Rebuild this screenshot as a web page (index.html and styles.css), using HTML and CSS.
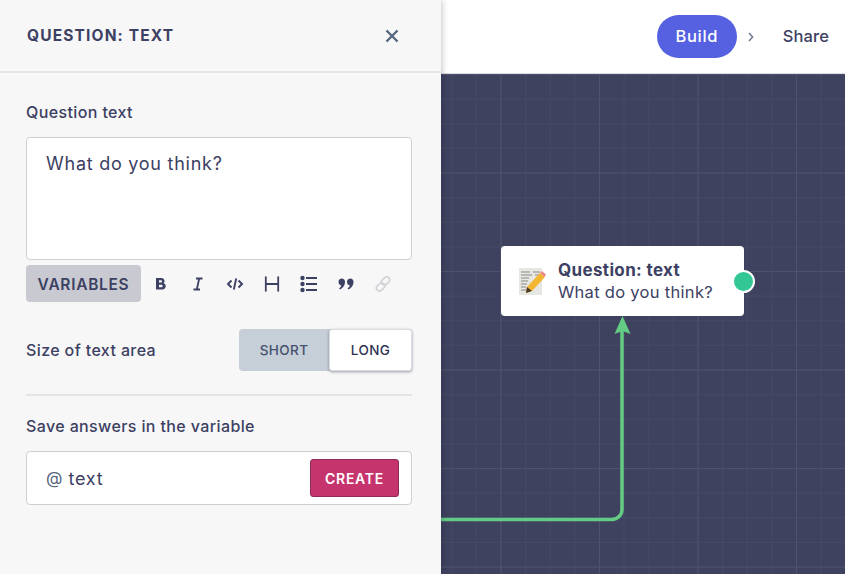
FILE: index.html
```html
<!DOCTYPE html>
<html lang="en">
<head>
<meta charset="utf-8">
<title>Question: text</title>
<link rel="stylesheet" href="styles.css">
</head>
<body>
<div class="app">
  <header class="topbar">
    <nav class="steps">
      <span class="step-active">Build</span>
      <svg class="chevron" width="6" height="10" viewBox="0 0 6 10"><path d="M1 1l3.600 4L1 9" fill="none" stroke="#73788f" stroke-width="1.500"/></svg>
      <span class="step">Share</span>
    </nav>
  </header>
  <main class="canvas">
    <svg class="edge" width="404" height="501" viewBox="0 0 404 501">
      <path d="M0 445.500H171a10 10 0 0 0 10-10V250" fill="none" stroke="#63cb84" stroke-width="3.500"/>
      <path d="M181.500 242l8 18-8-3-8 3z" fill="#63cb84"/>
    </svg>
    <div class="node">
      <svg class="memo" width="28" height="28" viewBox="0 0 28 28">
        <rect x="0" y="1" width="23" height="27" fill="#e6e6e2"/>
        <path d="M2 5h9M2 8h11M2 11h8M2 14h7M2 17h6M2 20h5M2 23h7M14 5h7M16 8h5" stroke="#8a8a86" stroke-width="1"/>
        <path d="M8 20L21 6l5 4-13 14-6 2z" fill="#f2b632"/>
        <path d="M21 6l2-2 4 3.500-1.500 2.500z" fill="#e88a8a"/>
        <path d="M7 26l1-6 5 4z" fill="#4a3a28"/>
      </svg>
      <div class="node-text">
        <strong class="node-title">Question: text</strong>
        <span class="node-sub">What do you think?</span>
      </div>
      <span class="port"></span>
    </div>
  </main>
  <aside class="panel">
    <div class="panel-head">
      <h1 class="panel-title">QUESTION: TEXT</h1>
      <svg class="close" width="14" height="14" viewBox="0 0 14 14"><path d="M1.500 1.500l11 11M12.500 1.500l-11 11" stroke="#56677d" stroke-width="2.400"/></svg>
    </div>
    <div class="panel-body">
      <label class="label">Question text</label>
      <div class="textarea">What do you think?</div>
      <div class="toolbar">
        <button class="vars">VARIABLES</button>
        <span class="tool">
          <svg width="18" height="18" viewBox="0 0 18 18"><path d="M4 3h5.500a3 3 0 0 1 2 5.300A3.200 3.200 0 0 1 10 14.500H4zM7 5.300v2.200h2a1.100 1.100 0 0 0 0-2.200zM7 9.700v2.500h2.400a1.250 1.250 0 0 0 0-2.500z" fill="#3c4063" fill-rule="evenodd"/></svg>
        </span>
        <span class="tool">
          <svg width="18" height="18" viewBox="0 0 18 18"><path d="M7 3.500h6.500M4.500 14.500H11M10.200 3.500L7.800 14.500" fill="none" stroke="#3c4063" stroke-width="1.800"/></svg>
        </span>
        <span class="tool">
          <svg width="18" height="18" viewBox="0 0 18 18"><path d="M5.500 5.500L2 9l3.500 3.500M12.500 5.500L16 9l-3.500 3.500M10.200 3.500L7.800 14.500" fill="none" stroke="#3c4063" stroke-width="1.900"/></svg>
        </span>
        <span class="tool">
          <svg width="18" height="18" viewBox="0 0 18 18"><path d="M2.800 1.500v15M15.200 1.500v15M2.800 9h12.400" fill="none" stroke="#3c4063" stroke-width="1.800"/></svg>
        </span>
        <span class="tool">
          <svg width="18" height="18" viewBox="0 0 18 18"><circle cx="2.500" cy="3" r="2.200" fill="#3c4063"/><circle cx="2.500" cy="9" r="2.200" fill="#3c4063"/><circle cx="2.500" cy="15" r="2.200" fill="#3c4063"/><path d="M6 3h11M6 9h11M6 15h11" stroke="#3c4063" stroke-width="1.800"/></svg>
        </span>
        <span class="tool">
          <svg width="18" height="18" viewBox="0 0 18 18"><path d="M4.500 3.500a3.500 3.500 0 0 1 3.500 3.500c0 3.500-2.200 6-5 7.500l-.9-1.300c1.200-.8 2-1.700 2.300-2.800A3.500 3.500 0 0 1 4.500 3.500zM13 3.500a3.500 3.500 0 0 1 3.500 3.500c0 3.500-2.200 6-5 7.500l-.9-1.300c1.200-.8 2-1.700 2.300-2.800A3.500 3.500 0 0 1 13 3.500z" fill="#3c4063"/></svg>
        </span>
        <span class="tool">
          <svg width="18" height="18" viewBox="0 0 18 18"><g fill="none" stroke="#d2d2d6" stroke-width="1.600"><rect x="8.500" y="1.500" width="6" height="9" rx="3" transform="rotate(45 11.500 6)"/><rect x="3.500" y="7.500" width="6" height="9" rx="3" transform="rotate(45 6.500 12)"/></g></svg>
        </span>
      </div>
      <div class="size-row">
        <span class="label">Size of text area</span>
        <div class="toggle">
          <span class="opt">SHORT</span>
          <span class="opt opt-on">LONG</span>
        </div>
      </div>
      <hr class="divider">
      <label class="label">Save answers in the variable</label>
      <div class="var-input">
        <span class="at">@</span>
        <span class="var-name">text</span>
        <button class="create">CREATE</button>
      </div>
    </div>
  </aside>
</div>
</body>
</html>
```
FILE: styles.css
```css
* { box-sizing: border-box; }
html, body { margin: 0; height: 100%; }
body {
  font-family: "Inter", "Liberation Sans", sans-serif;
  color: #3c4063;
  overflow: hidden;
}
.app {
  position: relative;
  width: 845px;
  height: 574px;
  display: flex;
  flex-direction: column;
  overflow: hidden;
}
.topbar {
  height: 74px;
  flex: none;
  background: #fff;
  border-bottom: 1px solid #d9dadd;
  display: flex;
  justify-content: flex-end;
  align-items: flex-start;
  padding: 15px 16px 0 0;
}
.steps { display: flex; align-items: center; }
.step-active {
  width: 80px;
  height: 43px;
  border-radius: 22px;
  background: #5561e0;
  color: #fff;
  font-size: 16.500px;
  font-weight: 500;
  letter-spacing: .7px;
  padding-bottom: 2px;
  display: flex;
  align-items: center;
  justify-content: center;
}
.chevron { margin: 1px 29px 0 11px; }
.step { font-size: 16.500px; font-weight: 500; letter-spacing: .1px; margin-top: -1px; }
.canvas {
  position: relative;
  flex: 1;
  background-color: #3e425e;
  background-image:
    linear-gradient(#4f526e 1px, transparent 1px),
    linear-gradient(90deg, #4f526e 1px, transparent 1px),
    linear-gradient(#464965 1px, transparent 1px),
    linear-gradient(90deg, #464965 1px, transparent 1px);
  background-size: 98.500px 98.500px, 98.500px 98.500px, 24.625px 24.625px, 24.625px 24.625px;
  background-position: 0 0, 8px 0, 0 0, 8px 0;
}
.edge { position: absolute; left: 441px; top: 0; }
.node {
  position: absolute;
  left: 501px;
  top: 172px;
  width: 243px;
  height: 70px;
  background: #fff;
  border-radius: 4px;
  display: flex;
  align-items: center;
  padding-left: 18px;
}
.memo { flex: none; margin-right: 11px; }
.node-text { display: flex; flex-direction: column; gap: 2px; }
.node-title { font-size: 17px; font-weight: 700; line-height: 20px; letter-spacing: .35px; }
.node-sub { font-size: 16.500px; line-height: 20px; letter-spacing: .3px; }
.port {
  position: absolute;
  right: -11px;
  top: 24px;
  width: 23px;
  height: 23px;
  border-radius: 50%;
  background: #34c796;
  border: 2px solid #fff;
}
.panel {
  position: absolute;
  left: 0;
  top: 0;
  bottom: 0;
  width: 441px;
  background: #f7f7f7;
  box-shadow: 1px 0 6px rgba(20, 22, 50, .25);
  display: flex;
  flex-direction: column;
}
.panel-head {
  height: 73px;
  flex: none;
  border-bottom: 2px solid #e6e6e6;
  display: flex;
  align-items: center;
  justify-content: space-between;
  padding: 0 42px 0 27px;
}
.panel-title {
  margin: 0;
  font-size: 15.500px;
  font-weight: 700;
  letter-spacing: 1.150px;
}
.close { margin-top: 1px; }
.panel-body {
  display: flex;
  flex-direction: column;
  padding: 29px 29px 0 26px;
}
.label { font-size: 16px; font-weight: 500; line-height: 20px; letter-spacing: .38px; }
.textarea {
  height: 123px;
  margin-top: 15px;
  background: #fff;
  border: 1px solid #cfcfcf;
  border-radius: 4px;
  padding: 15px 19px;
  font-size: 18px;
  line-height: 22px;
  letter-spacing: .75px;
}
.toolbar {
  display: flex;
  align-items: center;
  margin-top: 5px;
  height: 37px;
}
.vars {
  width: 115px;
  height: 37px;
  border: 0;
  border-radius: 4px;
  background: #c9cad1;
  color: #3c4063;
  font: 600 15.500px "Inter", "Liberation Sans", sans-serif;
  letter-spacing: .7px;
  padding: 2px 0 0;
  margin-right: 1px;
}
.tool {
  width: 37px;
  height: 37px;
  display: flex;
  align-items: center;
  justify-content: center;
}
.size-row {
  display: flex;
  align-items: center;
  justify-content: space-between;
  margin-top: 27px;
}
.toggle {
  display: flex;
  width: 173px;
  height: 42px;
  border-radius: 4px;
  background: #c6ced7;
}
.opt {
  flex: 1;
  display: flex;
  align-items: center;
  justify-content: center;
  font-size: 13.500px;
  font-weight: 500;
  letter-spacing: .4px;
  color: #44506f;
}
.opt-on {
  flex: none;
  width: 83px;
  background: #fff;
  border: 1px solid #d9dce0;
  border-radius: 3px;
  box-shadow: 0 1px 3px rgba(40, 45, 70, .45);
  color: #2e3252;
}
.divider {
  width: 100%;
  margin: 23px 0 20px;
  border: 0;
  border-top: 2px solid #e4e4e4;
}
.var-input {
  height: 54px;
  margin-top: 15px;
  background: #fff;
  border: 1px solid #cfcfcf;
  border-radius: 4px;
  display: flex;
  align-items: center;
  padding: 0 12px 0 19px;
  font-size: 18px;
  letter-spacing: .75px;
}
.at { color: #56677d; font-size: 17px; margin-right: 6px; letter-spacing: 0; }
.var-name { flex: 1; }
.create {
  width: 89px;
  height: 38px;
  border: 1px solid #8e2c59;
  border-radius: 3px;
  background: #c6346d;
  color: #fff;
  font: 600 14px "Inter", "Liberation Sans", sans-serif;
  letter-spacing: .7px;
  padding: 0;
}
```
